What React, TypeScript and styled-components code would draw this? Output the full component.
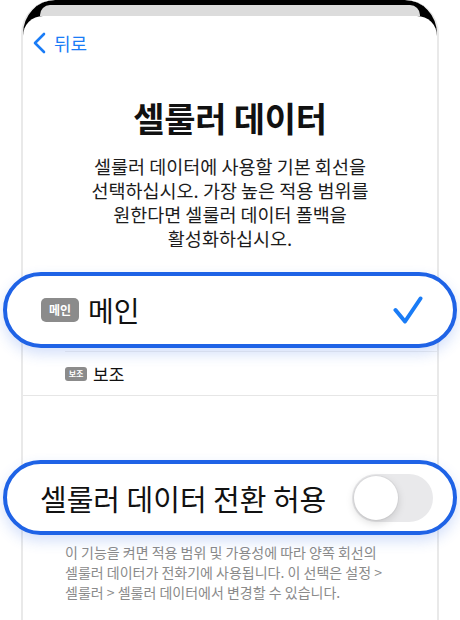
import styled, { createGlobalStyle } from "styled-components";

const GlobalStyle = createGlobalStyle`
  html, body {
    margin: 0;
    padding: 0;
    background: #fff;
  }
  body {
    font-family: "Noto Sans CJK KR", "Noto Sans", sans-serif;
    -webkit-font-smoothing: antialiased;
  }
  * {
    box-sizing: border-box;
  }
`;

const Phone = styled.div`
  margin: 0 21px;
  width: 418px;
  min-height: 620px;
  background: #000;
  border: 2px solid #e9e9e9;
  border-top: none;
  border-bottom: none;
  border-radius: 34px 34px 0 0;
  display: flex;
  flex-direction: column;
`;

const StatusStrip = styled.div`
  height: 11px;
  margin: 5px 17px 0;
  background: #dcdcdc;
  border-radius: 10px 10px 0 0;
`;

const Screen = styled.div`
  flex: 1;
  background: #fff;
  border-radius: 20px 20px 0 0;
  display: flex;
  flex-direction: column;
`;

const Nav = styled.div`
  padding: 16px 0 0 9px;
  height: 38px;
`;

const BackLink = styled.a`
  display: inline-flex;
  align-items: center;
  gap: 8px;
  color: #1a7cf6;
  font-size: 18px;
  line-height: 22px;
  cursor: pointer;
`;

const Title = styled.h1`
  margin: 44px 0 0;
  text-align: center;
  font-size: 34px;
  line-height: 40px;
  font-weight: 700;
  color: #111;
  letter-spacing: -0.3px;
`;

const Lead = styled.p`
  margin: 16px 0 0;
  text-align: center;
  font-size: 18.5px;
  line-height: 24px;
  color: #1c1c1c;
  white-space: nowrap;
`;

const Group = styled.div`
  margin-top: 22px;
  border-bottom: 1px solid #e6e6e6;
`;

const Callout = styled.div<{ $height: number }>`
  margin: 0 -20px;
  height: ${(p) => p.$height}px;
  background: #fff;
  border: 4px solid #1f63e6;
  border-radius: 40px;
  box-shadow: 0 6px 14px rgba(40, 100, 230, 0.2);
  display: flex;
  align-items: center;
  justify-content: space-between;
  position: relative;
`;

const Badge = styled.span<{ $small?: boolean }>`
  display: inline-flex;
  align-items: center;
  justify-content: center;
  width: ${(p) => (p.$small ? 22 : 38)}px;
  height: ${(p) => (p.$small ? 14 : 24)}px;
  border-radius: ${(p) => (p.$small ? 3 : 5)}px;
  background: #8b8b8b;
  color: #fff;
  font-size: ${(p) => (p.$small ? 8 : 12)}px;
  font-weight: 700;
  line-height: 1;
`;

const LineLabel = styled.div<{ $size: number }>`
  display: flex;
  align-items: center;
  gap: ${(p) => (p.$size > 20 ? 9 : 6)}px;
  font-size: ${(p) => p.$size}px;
  color: #111;
`;

const MainRow = styled(Callout)`
  padding: 0 30px 0 34px;
`;

const SubRow = styled.div`
  margin: 3px 0 0 42px;
  height: 44px;
  border-top: 1px solid #efefef;
  display: flex;
  align-items: center;
`;

const ToggleRow = styled(Callout)`
  margin-top: 64px;
  padding: 0 20px 0 33px;
`;

const ToggleLabel = styled.span`
  font-size: 29px;
  color: #111;
`;

const Switch = styled.div<{ $on: boolean }>`
  width: 81px;
  height: 48px;
  border-radius: 24px;
  background: ${(p) => (p.$on ? "#34c759" : "#e9e9eb")};
  padding: 2px;
  display: flex;
  justify-content: ${(p) => (p.$on ? "flex-end" : "flex-start")};
`;

const Knob = styled.div`
  width: 44px;
  height: 44px;
  border-radius: 50%;
  background: #fff;
  box-shadow: 0 3px 8px rgba(0, 0, 0, 0.15), 0 0 0 1px rgba(0, 0, 0, 0.04);
`;

const Footnote = styled.p`
  margin: 7px 0 0 42px;
  font-size: 14px;
  line-height: 20px;
  color: #8a8a8a;
  white-space: nowrap;
`;

export default function App() {
  return (
    <>
      <GlobalStyle />
      <Phone>
        <StatusStrip />
        <Screen>
          <Nav>
            <BackLink>
              <svg width="14" height="22" viewBox="0 0 14 22" fill="none">
                <path
                  d="M12 2 L3 11 L12 20"
                  stroke="currentColor"
                  strokeWidth="2.6"
                  strokeLinecap="round"
                  strokeLinejoin="round"
                />
              </svg>
              뒤로
            </BackLink>
          </Nav>

          <Title>셀룰러 데이터</Title>
          <Lead>
            셀룰러 데이터에 사용할 기본 회선을
            <br />
            선택하십시오. 가장 높은 적용 범위를
            <br />
            원한다면 셀룰러 데이터 폴백을
            <br />
            활성화하십시오.
          </Lead>

          <Group>
            <MainRow $height={76}>
              <LineLabel $size={28}>
                <Badge>메인</Badge>
                메인
              </LineLabel>
              <svg width="30" height="28" viewBox="0 0 30 28" fill="none">
                <path
                  d="M2.5 14 L12 25.5 L27.5 2.5"
                  stroke="#1a7cf6"
                  strokeWidth="4"
                  strokeLinecap="round"
                  strokeLinejoin="round"
                />
              </svg>
            </MainRow>
            <SubRow>
              <LineLabel $size={17}>
                <Badge $small>보조</Badge>
                보조
              </LineLabel>
            </SubRow>
          </Group>

          <ToggleRow $height={75}>
            <ToggleLabel>셀룰러 데이터 전환 허용</ToggleLabel>
            <Switch $on={false}>
              <Knob />
            </Switch>
          </ToggleRow>

          <Footnote>
            이 기능을 켜면 적용 범위 및 가용성에 따라 양쪽 회선의
            <br />
            셀룰러 데이터가 전화기에 사용됩니다. 이 선택은 설정 &gt;
            <br />
            셀룰러 &gt; 셀룰러 데이터에서 변경할 수 있습니다.
          </Footnote>
        </Screen>
      </Phone>
    </>
  );
}
